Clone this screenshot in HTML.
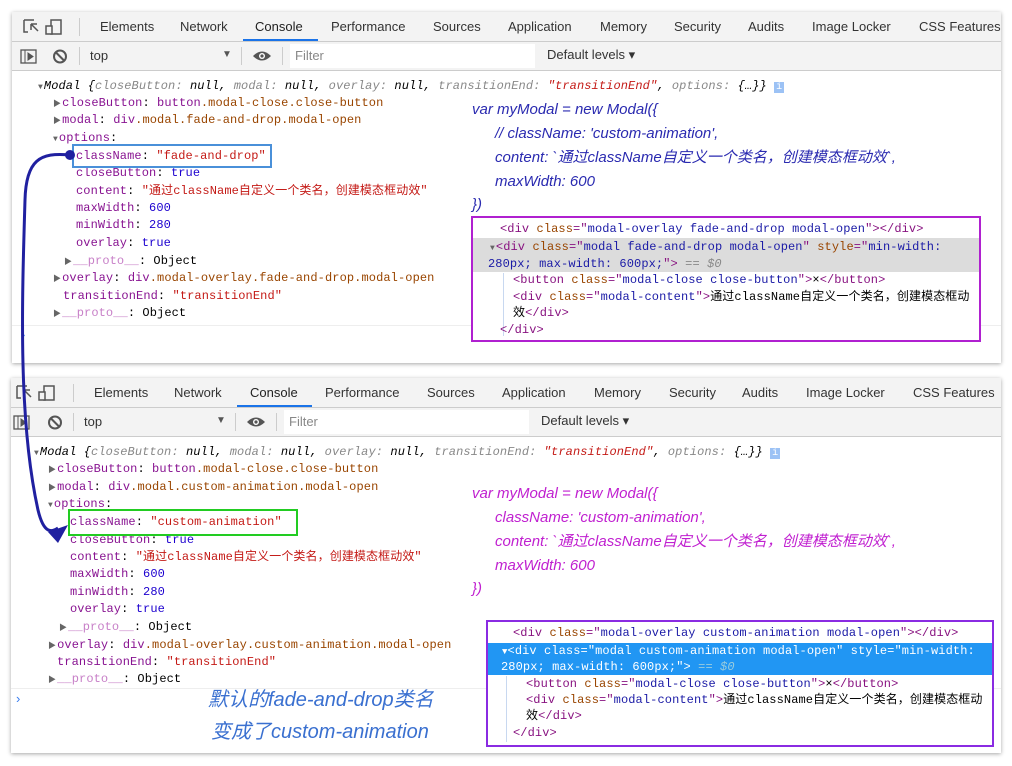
<!DOCTYPE html>
<html><head><meta charset="utf-8"><style>
body{margin:0;width:1012px;height:766px;background:#fff;position:relative;overflow:hidden;font-family:"Liberation Sans","Noto Sans CJK SC",sans-serif}
.p{position:absolute;background:#fff;box-shadow:0 1px 4px rgba(0,0,0,.35)}
.tb{position:absolute;left:0;right:0;top:0;height:29px;background:#f3f3f3;border-bottom:1px solid #ccc}
.tl{position:absolute;left:0;right:0;top:30px;height:28px;background:#f3f3f3;border-bottom:1px solid #ccc}
.t{position:absolute;top:7px;font-size:13px;color:#333;white-space:nowrap}
.a{position:absolute;white-space:nowrap;font-family:"Liberation Mono","Noto Sans CJK SC",monospace;font-size:12px;line-height:14px;letter-spacing:0.1px}
.k{color:#881391}.s{color:#c41a16}.n{color:#1c00cf}.g{color:#888}.tg{color:#881280}.at{color:#994500}.av{color:#1a1aa6}
.tri{color:#666;font-size:8px;margin-right:1px}
.h{position:absolute;white-space:nowrap;font-family:"Liberation Sans","Noto Sans CJK SC",sans-serif;font-style:italic;font-size:15px;line-height:18px}
</style></head><body>

<!-- Panel 1 -->
<div class="p" style="left:12px;top:12px;width:989px;height:351px">
 <div class="tb">
  <svg style="position:absolute;left:10px;top:6px" width="44" height="18"><path d="M2 2h10M2 2v12h4M9 6l7 7M9 6v6M9 6h6" stroke="#555" fill="none" stroke-width="1.5"/><rect x="29" y="2" width="10" height="14" stroke="#555" fill="none" stroke-width="1.5"/><rect x="24" y="8" width="6" height="8" stroke="#555" fill="#f3f3f3" stroke-width="1.5"/></svg>
  <div style="position:absolute;left:67px;top:6px;width:1px;height:18px;background:#ccc"></div>
  <span class="t" style="left:88px">Elements</span><span class="t" style="left:168px">Network</span><span class="t" style="left:243px;color:#222">Console</span><span class="t" style="left:319px">Performance</span><span class="t" style="left:421px">Sources</span><span class="t" style="left:496px">Application</span><span class="t" style="left:588px">Memory</span><span class="t" style="left:662px">Security</span><span class="t" style="left:736px">Audits</span><span class="t" style="left:800px">Image Locker</span><span class="t" style="left:907px">CSS Features</span>
  <div style="position:absolute;left:231px;top:27px;width:75px;height:2px;background:#1a73e8"></div>
 </div>
 <div class="tl">
  <svg style="position:absolute;left:8px;top:6px" width="60" height="17"><rect x="1" y="2" width="15" height="13" stroke="#555" fill="none" stroke-width="1.3"/><path d="M5 2v13M8 5l5 3.5-5 3.5z" stroke="#555" fill="#555" stroke-width="1"/><circle cx="40" cy="8.5" r="6" stroke="#555" fill="none" stroke-width="2"/><path d="M36 4.5l8 8" stroke="#555" stroke-width="2"/></svg>
  <div style="position:absolute;left:67px;top:5px;width:1px;height:18px;background:#ccc"></div>
  <span class="t" style="left:78px;top:6px">top</span><span style="position:absolute;left:210px;top:7px;font-size:10px;color:#555">▼</span>
  <div style="position:absolute;left:229px;top:5px;width:1px;height:18px;background:#ccc"></div>
  <svg style="position:absolute;left:240px;top:8px" width="20" height="12"><path d="M1 6Q10-3 19 6Q10 15 1 6z" fill="#555"/><circle cx="10" cy="6" r="3" fill="#fff"/><circle cx="10" cy="6" r="1.6" fill="#555"/></svg>
  <div style="position:absolute;left:270px;top:5px;width:1px;height:18px;background:#ccc"></div>
  <div style="position:absolute;left:278px;top:2px;width:245px;height:24px;background:#fff"></div>
  <span class="t" style="left:283px;top:6px;color:#888">Filter</span>
  <span class="t" style="left:535px;top:5px">Default levels ▾</span>
 </div>
 <div style="position:absolute;left:0;right:0;top:313px;height:1px;background:#eee"></div>
 <span style="position:absolute;left:9px;top:315px;color:#367cf1;font-size:13px">›</span>
</div>
<div class="a" style="left:38px;top:79px"><span class="tri">▼</span><i>Modal {<span class="g">closeButton:</span> null, <span class="g">modal:</span> null, <span class="g">overlay:</span> null, <span class="g">transitionEnd:</span> <span class="s">"transitionEnd"</span>, <span class="g">options:</span> {…}}</i> <span style="background:#9cc2f5;color:#fff;font-size:10px;padding:0 2px">i</span></div>
<div class="a" style="left:53px;top:96px"><span class="tri">▶</span><span class="k">closeButton</span>: <span class="k">button</span><span class="at">.modal-close.close-button</span></div>
<div class="a" style="left:53px;top:113px"><span class="tri">▶</span><span class="k">modal</span>: <span class="k">div</span><span class="at">.modal.fade-and-drop.modal-open</span></div>
<div class="a" style="left:53px;top:131px"><span class="tri">▼</span><span class="k">options</span>:</div>
<div class="a" style="left:76px;top:149px"><span class="k">className</span>: <span class="s">"fade-and-drop"</span></div>
<div class="a" style="left:76px;top:166px"><span class="k">closeButton</span>: <span class="n">true</span></div>
<div class="a" style="left:76px;top:184px"><span class="k">content</span>: <span class="s">"通过className自定义一个类名，创建模态框动效"</span></div>
<div class="a" style="left:76px;top:201px"><span class="k">maxWidth</span>: <span class="n">600</span></div>
<div class="a" style="left:76px;top:218px"><span class="k">minWidth</span>: <span class="n">280</span></div>
<div class="a" style="left:76px;top:236px"><span class="k">overlay</span>: <span class="n">true</span></div>
<div class="a" style="left:64px;top:254px"><span class="tri">▶</span><span style="color:#c880c8">__proto__</span>: Object</div>
<div class="a" style="left:53px;top:271px"><span class="tri">▶</span><span class="k">overlay</span>: <span class="k">div</span><span class="at">.modal-overlay.fade-and-drop.modal-open</span></div>
<div class="a" style="left:63px;top:289px"><span class="k">transitionEnd</span>: <span class="s">"transitionEnd"</span></div>
<div class="a" style="left:53px;top:306px"><span class="tri">▶</span><span style="color:#c880c8">__proto__</span>: Object</div>
<div style="position:absolute;left:72px;top:144px;width:196px;height:20px;border:2px solid #4a90d9"></div>

<div style="color:#2a2ab0">
<div class="h" style="left:472px;top:101px">var myModal = new Modal({</div>
<div class="h" style="left:495px;top:125px">// className: 'custom-animation',</div>
<div class="h" style="left:495px;top:149px">content: `通过className自定义一个类名，创建模态框动效`,</div>
<div class="h" style="left:495px;top:173px">maxWidth: 600</div>
<div class="h" style="left:472px;top:196px">})</div>
</div>
<div style="position:absolute;left:471px;top:216px;width:506px;height:122px;border:2px solid #b020d0;background:#fff"></div>
<div style="position:absolute;left:473px;top:238px;width:506px;height:34px;background:#dcdcdc"></div>
<div style="position:absolute;left:503px;top:273px;width:1px;height:63px;background:#c8d8f0"></div>
<div class="a" style="left:500px;top:222px"><span class="tg">&lt;div</span> <span class="at">class</span><span class="tg">="</span><span class="av">modal-overlay fade-and-drop modal-open</span><span class="tg">"&gt;&lt;/div&gt;</span></div>
<div class="a" style="left:490px;top:240px"><span class="tri">▼</span><span class="tg">&lt;div</span> <span class="at">class</span><span class="tg">="</span><span class="av">modal fade-and-drop modal-open</span><span class="tg">"</span> <span class="at">style</span><span class="tg">="</span><span class="av">min-width:</span></div>
<div class="a" style="left:488px;top:257px"><span class="av">280px; max-width: 600px;</span><span class="tg">"&gt;</span> <span class="g">== <i>$0</i></span></div>
<div class="a" style="left:513px;top:273px"><span class="tg">&lt;button</span> <span class="at">class</span><span class="tg">="</span><span class="av">modal-close close-button</span><span class="tg">"&gt;</span>×<span class="tg">&lt;/button&gt;</span></div>
<div class="a" style="left:513px;top:290px"><span class="tg">&lt;div</span> <span class="at">class</span><span class="tg">="</span><span class="av">modal-content</span><span class="tg">"&gt;</span>通过className自定义一个类名，创建模态框动</div>
<div class="a" style="left:513px;top:306px">效<span class="tg">&lt;/div&gt;</span></div>
<div class="a" style="left:500px;top:323px"><span class="tg">&lt;/div&gt;</span></div>

<!-- Panel 2 -->
<div class="p" style="left:11px;top:378px;width:990px;height:375px">
 <div class="tb">
  <svg style="position:absolute;left:4px;top:6px" width="44" height="18"><path d="M2 2h10M2 2v12h4M9 6l7 7M9 6v6M9 6h6" stroke="#555" fill="none" stroke-width="1.5"/><rect x="29" y="2" width="10" height="14" stroke="#555" fill="none" stroke-width="1.5"/><rect x="24" y="8" width="6" height="8" stroke="#555" fill="#f3f3f3" stroke-width="1.5"/></svg>
  <div style="position:absolute;left:62px;top:6px;width:1px;height:18px;background:#ccc"></div>
  <span class="t" style="left:83px">Elements</span><span class="t" style="left:163px">Network</span><span class="t" style="left:239px;color:#222">Console</span><span class="t" style="left:314px">Performance</span><span class="t" style="left:416px">Sources</span><span class="t" style="left:491px">Application</span><span class="t" style="left:583px">Memory</span><span class="t" style="left:658px">Security</span><span class="t" style="left:731px">Audits</span><span class="t" style="left:795px">Image Locker</span><span class="t" style="left:902px">CSS Features</span>
  <div style="position:absolute;left:226px;top:27px;width:75px;height:2px;background:#1a73e8"></div>
 </div>
 <div class="tl">
  <svg style="position:absolute;left:2px;top:6px" width="60" height="17"><rect x="1" y="2" width="15" height="13" stroke="#555" fill="none" stroke-width="1.3"/><path d="M5 2v13M8 5l5 3.5-5 3.5z" stroke="#555" fill="#555" stroke-width="1"/><circle cx="42" cy="8.5" r="6" stroke="#555" fill="none" stroke-width="2"/><path d="M38 4.5l8 8" stroke="#555" stroke-width="2"/></svg>
  <div style="position:absolute;left:62px;top:5px;width:1px;height:18px;background:#ccc"></div>
  <span class="t" style="left:73px;top:6px">top</span><span style="position:absolute;left:205px;top:7px;font-size:10px;color:#555">▼</span>
  <div style="position:absolute;left:224px;top:5px;width:1px;height:18px;background:#ccc"></div>
  <svg style="position:absolute;left:235px;top:8px" width="20" height="12"><path d="M1 6Q10-3 19 6Q10 15 1 6z" fill="#555"/><circle cx="10" cy="6" r="3" fill="#fff"/><circle cx="10" cy="6" r="1.6" fill="#555"/></svg>
  <div style="position:absolute;left:265px;top:5px;width:1px;height:18px;background:#ccc"></div>
  <div style="position:absolute;left:273px;top:2px;width:245px;height:24px;background:#fff"></div>
  <span class="t" style="left:278px;top:6px;color:#888">Filter</span>
  <span class="t" style="left:530px;top:5px">Default levels ▾</span>
 </div>
 <div style="position:absolute;left:0;right:0;top:310px;height:1px;background:#eee"></div>
 <span style="position:absolute;left:5px;top:313px;color:#367cf1;font-size:13px">›</span>
</div>
<div class="a" style="left:34px;top:445px"><span class="tri">▼</span><i>Modal {<span class="g">closeButton:</span> null, <span class="g">modal:</span> null, <span class="g">overlay:</span> null, <span class="g">transitionEnd:</span> <span class="s">"transitionEnd"</span>, <span class="g">options:</span> {…}}</i> <span style="background:#9cc2f5;color:#fff;font-size:10px;padding:0 2px">i</span></div>
<div class="a" style="left:48px;top:462px"><span class="tri">▶</span><span class="k">closeButton</span>: <span class="k">button</span><span class="at">.modal-close.close-button</span></div>
<div class="a" style="left:48px;top:480px"><span class="tri">▶</span><span class="k">modal</span>: <span class="k">div</span><span class="at">.modal.custom-animation.modal-open</span></div>
<div class="a" style="left:48px;top:497px"><span class="tri">▼</span><span class="k">options</span>:</div>
<div class="a" style="left:70px;top:515px"><span class="k">className</span>: <span class="s">"custom-animation"</span></div>
<div class="a" style="left:70px;top:533px"><span class="k">closeButton</span>: <span class="n">true</span></div>
<div class="a" style="left:70px;top:550px"><span class="k">content</span>: <span class="s">"通过className自定义一个类名，创建模态框动效"</span></div>
<div class="a" style="left:70px;top:567px"><span class="k">maxWidth</span>: <span class="n">600</span></div>
<div class="a" style="left:70px;top:585px"><span class="k">minWidth</span>: <span class="n">280</span></div>
<div class="a" style="left:70px;top:602px"><span class="k">overlay</span>: <span class="n">true</span></div>
<div class="a" style="left:59px;top:620px"><span class="tri">▶</span><span style="color:#c880c8">__proto__</span>: Object</div>
<div class="a" style="left:48px;top:638px"><span class="tri">▶</span><span class="k">overlay</span>: <span class="k">div</span><span class="at">.modal-overlay.custom-animation.modal-open</span></div>
<div class="a" style="left:57px;top:655px"><span class="k">transitionEnd</span>: <span class="s">"transitionEnd"</span></div>
<div class="a" style="left:48px;top:672px"><span class="tri">▶</span><span style="color:#c880c8">__proto__</span>: Object</div>
<div style="position:absolute;left:68px;top:509px;width:226px;height:23px;border:2px solid #22cc22"></div>

<div style="color:#c020d0">
<div class="h" style="left:472px;top:485px">var myModal = new Modal({</div>
<div class="h" style="left:495px;top:509px">className: 'custom-animation',</div>
<div class="h" style="left:495px;top:533px">content: `通过className自定义一个类名，创建模态框动效`,</div>
<div class="h" style="left:495px;top:557px">maxWidth: 600</div>
<div class="h" style="left:472px;top:580px">})</div>
</div>
<div style="position:absolute;left:486px;top:620px;width:504px;height:123px;border:2px solid #8a2be2;background:#fff"></div>
<div style="position:absolute;left:488px;top:643px;width:504px;height:32px;background:#2196f3"></div>
<div style="position:absolute;left:506px;top:676px;width:1px;height:66px;background:#c8d8f0"></div>
<div class="a" style="left:513px;top:626px"><span class="tg">&lt;div</span> <span class="at">class</span><span class="tg">="</span><span class="av">modal-overlay custom-animation modal-open</span><span class="tg">"&gt;&lt;/div&gt;</span></div>
<div class="a" style="left:502px;top:644px;color:#fff"><span style="font-size:9px">▼</span>&lt;div class="modal custom-animation modal-open" style="min-width:</div>
<div class="a" style="left:501px;top:660px;color:#fff">280px; max-width: 600px;"&gt; <span style="color:#9cd">== <i>$0</i></span></div>
<div class="a" style="left:526px;top:677px"><span class="tg">&lt;button</span> <span class="at">class</span><span class="tg">="</span><span class="av">modal-close close-button</span><span class="tg">"&gt;</span>×<span class="tg">&lt;/button&gt;</span></div>
<div class="a" style="left:526px;top:693px"><span class="tg">&lt;div</span> <span class="at">class</span><span class="tg">="</span><span class="av">modal-content</span><span class="tg">"&gt;</span>通过className自定义一个类名，创建模态框动</div>
<div class="a" style="left:526px;top:709px">效<span class="tg">&lt;/div&gt;</span></div>
<div class="a" style="left:513px;top:726px"><span class="tg">&lt;/div&gt;</span></div>

<div class="h" style="left:208px;top:688px;font-size:20px;line-height:24px;color:#3a70d0">默认的fade-and-drop类名</div>
<div class="h" style="left:211px;top:720px;font-size:20px;line-height:24px;color:#3a70d0">变成了custom-animation</div>

<svg style="position:absolute;left:0;top:0" width="1012" height="766">
 <path d="M70 155 C40 152 26 160 25 200 C22 300 18 420 38 510 C44 535 52 532 58 528" stroke="#2020a0" stroke-width="3" fill="none"/>
 <circle cx="70" cy="155" r="5" fill="#2020a0"/>
 <path d="M48 532 L68 525 L58 543 Z" fill="#2020a0"/>
</svg>
</body></html>
